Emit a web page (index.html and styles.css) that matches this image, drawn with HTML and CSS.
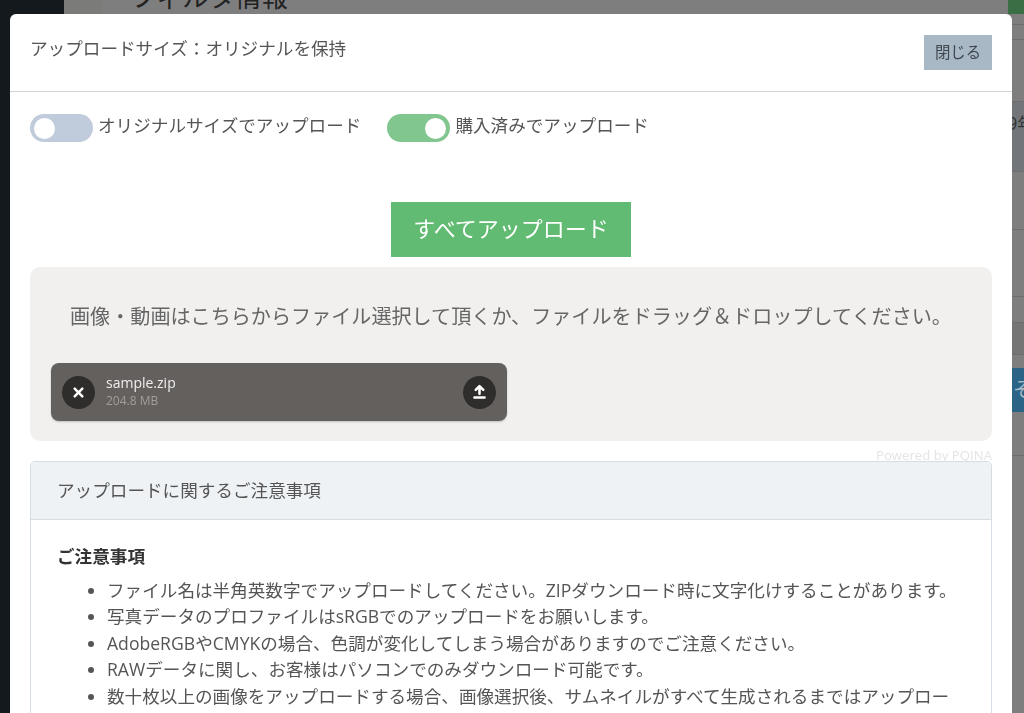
FILE: index.html
```html
<!DOCTYPE html>
<html lang="ja">
<head>
<meta charset="utf-8">
<title>アップロード</title>
<link rel="stylesheet" href="styles.css">
</head>
<body>
<div class="page">
  <aside class="side"></aside>
  <div class="strip"></div>
  <main class="main">
    <h1 class="page-title">フィルタ情報</h1>
    <div class="bg-green"></div>
    <div class="bg-row h25"></div>
    <div class="bg-row h15"></div>
    <div class="bg-row h62"></div>
    <div class="bg-row h70 tint"><span class="year">2019年</span></div>
    <div class="bg-row h58"></div>
    <div class="bg-row h67"></div>
    <div class="bg-row h26"></div>
    <div class="bg-row h32 dim"></div>
    <div class="bg-row-blue"><span class="blue-text">そ</span></div>
    <div class="bg-row h44"></div>
  </main>
</div>

<div class="modal">
  <header class="modal-header">
    <h5 class="modal-title">アップロードサイズ：オリジナルを保持</h5>
    <button class="btn-close" type="button">閉じる</button>
  </header>
  <div class="modal-body">
    <div class="switches">
      <label class="switch">
        <span class="track"><span class="knob"></span></span>
        <span class="switch-text">オリジナルサイズでアップロード</span>
      </label>
      <label class="switch">
        <span class="track on"><span class="knob"></span></span>
        <span class="switch-text">購入済みでアップロード</span>
      </label>
    </div>
    <div class="actions">
      <button class="btn-upload" type="button">すべてアップロード</button>
    </div>
    <section class="drop">
      <p class="drop-label">画像・動画はこちらからファイル選択して頂くか、ファイルをドラッグ＆ドロップしてください。</p>
      <div class="file">
        <span class="circle">
          <svg viewBox="0 0 26 26" width="33" height="33"><path fill="#fff" d="M11.586 13l-2.293 2.293a1 1 0 0 0 1.414 1.414L13 14.414l2.293 2.293a1 1 0 0 0 1.414-1.414L14.414 13l2.293-2.293a1 1 0 0 0-1.414-1.414L13 11.586l-2.293-2.293a1 1 0 0 0-1.414 1.414L11.586 13z"/></svg>
        </span>
        <span class="file-info">
          <span class="file-name">sample.zip</span>
          <span class="file-size">204.8 MB</span>
        </span>
        <span class="circle">
          <svg viewBox="0 0 26 26" width="33" height="33"><path fill="#fff" d="M14 10.414v3.585a1 1 0 0 1-2 0v-3.585l-1.293 1.293a1 1 0 0 1-1.414-1.415l3-3a1 1 0 0 1 1.414 0l3 3a1 1 0 0 1-1.414 1.415L14 10.414zM9 18a1 1 0 0 1 0-2h8a1 1 0 0 1 0 2H9z"/></svg>
        </span>
      </div>
    </section>
    <div class="credit">Powered by PQINA</div>
    <section class="card">
      <div class="card-header">アップロードに関するご注意事項</div>
      <div class="card-body">
        <p class="card-heading">ご注意事項</p>
        <ul class="notes">
          <li>ファイル名は半角英数字でアップロードしてください。ZIPダウンロード時に文字化けすることがあります。</li>
          <li>写真データのプロファイルはsRGBでのアップロードをお願いします。</li>
          <li>AdobeRGBやCMYKの場合、色調が変化してしまう場合がありますのでご注意ください。</li>
          <li>RAWデータに関し、お客様はパソコンでのみダウンロード可能です。</li>
          <li>数十枚以上の画像をアップロードする場合、画像選択後、サムネイルがすべて生成されるまではアップロードを開始しないでください。</li>
        </ul>
      </div>
    </section>
  </div>
</div>
</body>
</html>
```
FILE: styles.css
```css
* { box-sizing: border-box; }
html, body { height: 100%; }
body {
  margin: 0;
  overflow: hidden;
  background: #7e7e7e;
  color: #555;
  font-family: "Open Sans", "Noto Sans CJK JP", sans-serif;
  font-size: 17.6px;
  line-height: 1.5;
}

/* Dimmed page behind the modal */
.page { display: flex; height: 713px; overflow: hidden; }
.side { flex: 0 0 64px; background: #14191d; }
.strip { flex: 0 0 38px; background: #7b7b7a; }
.main { flex: 1; position: relative; min-width: 0; }
.page-title {
  margin: -17px 0 17px 28px;
  font-size: 26.4px;
  font-weight: 400;
  line-height: 28px;
  height: 0;
  overflow: visible;
  color: #222;
}
.bg-green { position: absolute; top: 0; right: 0; width: 16px; height: 14px; background: #3a6f45; }
.bg-row { border-bottom: 1px solid #6e6e6e; position: relative; }
.h25 { height: 25px; }
.h15 { height: 15px; }
.h62 { height: 62px; }
.h70 { height: 70px; }
.h58 { height: 58px; }
.h67 { height: 67px; }
.h26 { height: 26px; }
.h32 { height: 32px; }
.h44 { height: 44px; }
.tint { background: #72767b; }
.dim { background: #757575; }
.year { position: absolute; left: 875px; top: 8px; color: #333; white-space: nowrap; }
.bg-row-blue {
  height: 44px;
  margin-top: 13px;
  background: #2a6386;
  color: #a5b8c4;
  overflow: hidden;
}
.blue-text { display: block; margin-left: 911px; font-size: 20px; line-height: 44px; }

/* Modal */
.modal {
  position: fixed;
  left: 10px;
  top: 14px;
  width: 1002px;
  height: 760px;
  background: #fff;
  border-radius: 6px;
  overflow: hidden;
}
.modal-header {
  display: flex;
  justify-content: space-between;
  align-items: flex-start;
  height: 78px;
  padding: 21px 20px;
  border-bottom: 1px solid #cfd6dc;
}
.modal-title { margin: 0; font-size: 17.6px; font-weight: 400; line-height: 1.5; }
.btn-close {
  width: 68px;
  height: 35px;
  padding: 0;
  border: 0;
  background: #a8b8c4;
  color: #3f4750;
  font: inherit;
  font-size: 15.4px;
}
.modal-body { padding: 22px 20px 0; }
.switches { display: flex; gap: 26px; }
.switch { display: flex; align-items: center; gap: 5px; height: 28px; }
.switch-text { margin-top: -5px; }
.track {
  display: flex;
  align-items: center;
  width: 63px;
  height: 28px;
  padding: 0 4px;
  border-radius: 14px;
  background: #c0ccdc;
}
.track.on { justify-content: flex-end; background: #82c68f; }
.knob { width: 21px; height: 21px; border-radius: 50%; background: #fff; }
.actions { display: flex; justify-content: center; margin-top: 60px; }
.btn-upload {
  width: 240px;
  height: 55px;
  padding: 0 0 2px;
  border: 0;
  background: #62bb72;
  color: #fff;
  font: inherit;
  font-size: 22px;
}
.drop {
  height: 174px;
  margin-top: 10px;
  padding: 33px 21px 0;
  background: #f1f0ef;
  border-radius: 10px;
}
.drop-label {
  margin: 0;
  height: 34px;
  font-size: 20.1px;
  line-height: 34px;
  text-align: center;
  color: #666;
  white-space: nowrap;
}
.file {
  display: flex;
  align-items: center;
  gap: 11px;
  width: 456px;
  height: 58px;
  margin-top: 29px;
  padding: 0 11px;
  background: #64605e;
  border-radius: 8px;
  box-shadow: 0 1px 2px rgba(0,0,0,.2);
}
.circle {
  flex: 0 0 33px;
  height: 33px;
  border-radius: 50%;
  background: #2f2d2c;
  display: flex;
}
.file-info { flex: 1; display: flex; flex-direction: column; font-size: 14px; line-height: 18px; }
.file-name { color: #f0eeee; }
.file-size { color: #a19e9c; font-size: 12px; }
.credit {
  height: 20px;
  padding-top: 4px;
  text-align: right;
  font-size: 13.2px;
  line-height: 20px;
  color: #e4e4e4;
}
.card { border: 1px solid #d5dce3; border-radius: 5px; overflow: hidden; position: relative; }
.card-header {
  height: 58px;
  padding: 0 26px;
  line-height: 57px;
  background: #eef2f5;
  border-bottom: 1px solid #d5dce3;
}
.card-body { padding: 23px 32px 26px 26px; }
.card-heading { margin: 0 0 7.6px; font-weight: 700; color: #333; }
.notes { margin: 0; padding-left: 50px; line-height: 26.4px; }
```
